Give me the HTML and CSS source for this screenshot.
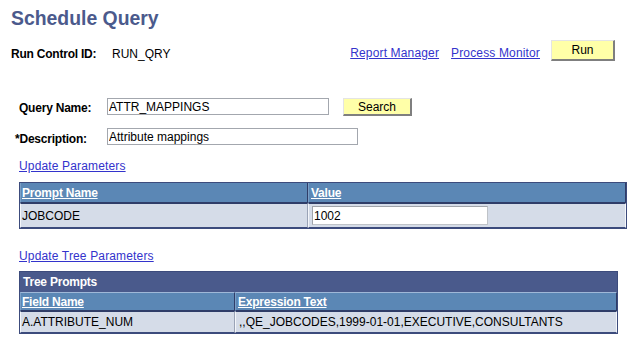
FILE: index.html
```html
<!DOCTYPE html>
<html>
<head>
<meta charset="utf-8">
<title>Schedule Query</title>
<link rel="stylesheet" href="styles.css">
</head>
<body>
<div class="page">
  <h1 class="title">Schedule Query</h1>

  <div class="runbar">
    <span class="lbl lbl-run">Run Control ID:</span>
    <span class="val">RUN_QRY</span>
    <div class="actions">
      <a href="#" class="link link-rm">Report Manager</a>
      <a href="#" class="link link-pm">Process Monitor</a>
      <button class="btn btn-run" type="button">Run</button>
    </div>
  </div>

  <div class="form">
    <div class="frow frow-1">
      <label class="lbl flabel flabel-1">Query Name:</label>
      <input class="field field-query" type="text" value="ATTR_MAPPINGS">
      <button class="btn btn-search" type="button">Search</button>
    </div>
    <div class="frow frow-2">
      <label class="lbl flabel flabel-2"><span class="req">*</span>Description:</label>
      <input class="field field-desc" type="text" value="Attribute mappings">
    </div>
  </div>

  <a href="#" class="link section-link link-params">Update Parameters</a>

  <div class="grid grid-params">
    <div class="th th-first"><a href="#" class="hlink">Prompt Name</a></div>
    <div class="th"><a href="#" class="hlink">Value</a></div>
    <div class="td td-first">JOBCODE</div>
    <div class="td td-val"><input class="field field-val" type="text" value="1002"></div>
  </div>

  <a href="#" class="link section-link link-tree">Update Tree Parameters</a>

  <div class="grid grid-tree">
    <div class="gtitle">Tree Prompts</div>
    <div class="th th-first"><a href="#" class="hlink">Field Name</a></div>
    <div class="th"><a href="#" class="hlink">Expression Text</a></div>
    <div class="td td-first">A.ATTRIBUTE_NUM</div>
    <div class="td td-expr">,,QE_JOBCODES,1999-01-01,EXECUTIVE,CONSULTANTS</div>
  </div>
</div>
</body>
</html>
```

FILE: styles.css
```css
html, body {
  margin: 0;
  padding: 0;
  background: #ffffff;
}

body {
  font-family: "Liberation Sans", Arial, sans-serif;
  font-size: 12px;
  color: #000000;
}

.page {
  width: 638px;
}

.title {
  margin: 0;
  padding: 7px 0 0 11px;
  font-size: 19.4px;
  line-height: 23px;
  font-weight: bold;
  color: #4b5a8c;
}

.lbl {
  font-weight: bold;
  letter-spacing: -0.22px;
  line-height: 14px;
}

.link {
  color: #3333cc;
  text-decoration: underline;
  letter-spacing: 0.15px;
  line-height: 14px;
}

/* Run control bar */
.runbar {
  display: flex;
  align-items: flex-start;
  height: 21px;
  margin-top: 10px;
  padding: 0 23px 0 11px;
}

.lbl-run {
  width: 101px;
  flex: none;
  margin-top: 7px;
}

.val {
  margin-top: 7px;
  line-height: 14px;
}

.actions {
  margin-left: auto;
  display: flex;
  align-items: flex-start;
}

.actions .link {
  margin-top: 6px;
}

.link-rm {
  margin-right: 12px;
}

.link-pm {
  margin-right: 11px;
}

.btn {
  margin: 0;
  padding: 0;
  box-sizing: border-box;
  font-family: "Liberation Sans", Arial, sans-serif;
  font-size: 12px;
  color: #000000;
  background: #ffffa8;
  border-style: solid;
  border-width: 1px 2px 2px 1px;
  border-color: #e4e4e4 #7f7f7f #7f7f7f #e4e4e4;
  cursor: pointer;
}

.btn-run {
  width: 64px;
  height: 21px;
}

.btn-search {
  width: 69px;
  height: 18px;
  margin-left: 14px;
}

/* Form */
.form {
  margin-top: 37px;
  padding-left: 19px;
}

.frow {
  display: flex;
  align-items: flex-start;
}

.frow-1 {
  height: 18px;
}

.frow-2 {
  height: 17px;
  margin-top: 12px;
}

.flabel {
  width: 88px;
  flex: none;
}

.flabel-1 {
  margin-top: 3px;
}

.flabel-2 {
  margin-top: 4px;
}

.req {
  margin-left: -4px;
}

.field {
  margin: 0;
  box-sizing: border-box;
  height: 17px;
  padding: 0 1px;
  border: 1px solid #a3a7ae;
  background: #ffffff;
  font-family: "Liberation Sans", Arial, sans-serif;
  font-size: 12px;
  color: #000000;
  outline: none;
}

.field-query {
  width: 222px;
}

.field-desc {
  width: 251px;
}

.field-val {
  width: 176px;
  height: 19px;
  border: 1px solid #bfc3c8;
  border-top-color: #a0a4aa;
  border-left-color: #a0a4aa;
}

/* Section links */
.section-link {
  display: block;
  width: fit-content;
  margin-left: 19px;
}

.link-params {
  margin-top: 14px;
  margin-bottom: 9px;
}

.link-tree {
  margin-top: 20px;
  margin-bottom: 8px;
}

/* Grids */
.grid {
  display: grid;
  box-sizing: border-box;
  margin-left: 19px;
  border: 1px solid #3c4b7c;
  background: #d5dce8;
}

.grid-params {
  width: 608px;
  grid-template-columns: 288px 1fr;
  grid-template-rows: 20px 25px;
}

.grid-tree {
  width: 599px;
  grid-template-columns: 215px 1fr;
  grid-template-rows: 20px 19px 22px;
}

.gtitle {
  grid-column: 1 / -1;
  display: flex;
  align-items: center;
  padding-left: 3px;
  background: #4a5a8c;
  color: #ffffff;
  font-weight: bold;
  letter-spacing: -0.22px;
  line-height: 14px;
}

.th {
  display: flex;
  align-items: center;
  box-sizing: border-box;
  padding-left: 2px;
  background: #5b87b5;
  border-left: 1px solid #7b9fc7;
  border-right: 1px solid #2f3d68;
  border-bottom: 1px solid #2f3d68;
  line-height: 14px;
}

.grid-tree .th {
  border-top: 1px solid #9fb8d8;
}

.th-first {
  padding-left: 1px;
}

.hlink {
  color: #ffffff;
  font-weight: bold;
  letter-spacing: -0.22px;
  text-decoration: underline;
}

.td {
  display: flex;
  align-items: center;
  box-sizing: border-box;
  padding-left: 1px;
  border-left: 1px solid #f4f6fa;
  border-right: 1px solid #9aa3b6;
  border-top: 1px solid #2f3d68;
  border-bottom: 1px solid #3c4b7c;
  white-space: nowrap;
  line-height: 14px;
}

.td:last-child {
  border-right-color: #f4f6fa;
}

.td-val {
  padding-left: 3px;
}

.td-expr {
  padding-left: 3px;
}
```
